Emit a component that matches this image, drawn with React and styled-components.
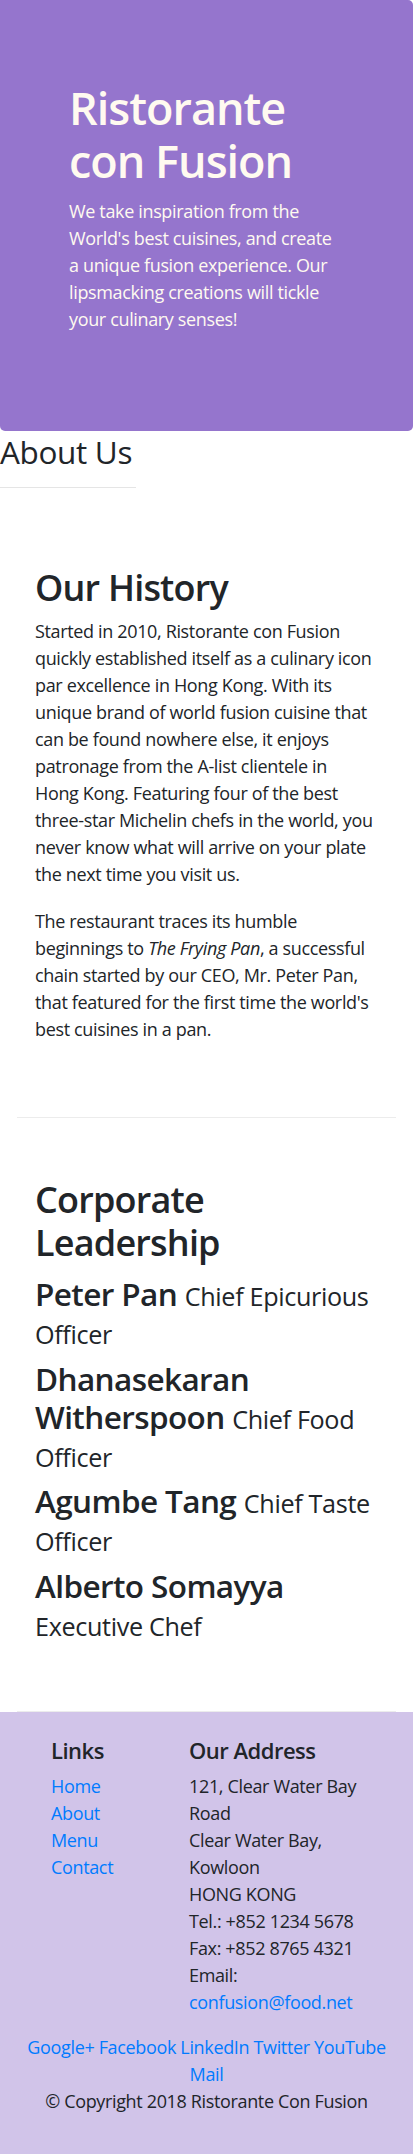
import React from 'react';
import styled, { createGlobalStyle } from 'styled-components';

const GlobalStyle = createGlobalStyle`
  body {
    margin: 0;
    font-family: "Open Sans", "Noto Sans", sans-serif;
    font-size: 18px;
    line-height: 1.5;
    color: #212529;
    background: #fff;
    letter-spacing: -0.35px;
  }
`;

const Jumbotron = styled.header`
  background: #9575cd;
  color: floralwhite;
  border-radius: 0 5px 5px 5px;
  padding: 81px 69px 98px;
`;

const Title = styled.h1`
  margin: 0 0 11px;
  font-size: 45px;
  line-height: 53px;
  font-weight: 600;
  letter-spacing: -1px;
`;

const Lead = styled.p`
  margin: 0;
  font-size: 18px;
  line-height: 27px;
`;

const PageHeading = styled.h3`
  margin: 2px 0 0;
  font-size: 31.5px;
  line-height: 1.2;
  font-weight: 400;
`;

const Divider = styled.hr`
  width: 136px;
  margin: 16px 0 18px;
  border: 0;
  border-top: 1px solid rgba(0, 0, 0, 0.1);
`;

const Section = styled.section`
  margin: 0 17px;
  padding: 60px 18px ${(p) => p.$bottom}px;
  border-bottom: 1px solid #ececec;
`;

const SectionTitle = styled.h2`
  margin: 0 0 ${(p) => p.$gap}px;
  font-size: 36px;
  line-height: 1.2;
  font-weight: 600;
  letter-spacing: -0.8px;
`;

const Para = styled.p`
  margin: 0 0 20px;
  &:last-child {
    margin-bottom: 0;
  }
`;

const Leader = styled.h3`
  margin: 0 0 9px;
  font-size: 31.5px;
  line-height: 1.2;
  font-weight: 600;
  letter-spacing: -0.6px;
`;

const Role = styled.small`
  font-size: 80%;
  font-weight: 400;
  letter-spacing: -0.35px;
`;

const Footer = styled.footer`
  background: #d1c4e9;
  padding: 25px 15px 40px;
`;

const FooterGrid = styled.div`
  display: grid;
  grid-template-columns: 108px 176px;
  column-gap: 30px;
  padding-left: 36px;
`;

const FooterHeading = styled.h5`
  margin: 0 0 9px;
  font-size: 22px;
  line-height: 27px;
  font-weight: 600;
  letter-spacing: -0.5px;
`;

const LinkList = styled.ul`
  list-style: none;
  margin: 0;
  padding: 0;
`;

const Link = styled.a`
  color: #007bff;
  text-decoration: none;
`;

const Address = styled.address`
  font-style: normal;
  margin: 0 0 18px;
`;

const Social = styled.div`
  text-align: center;
`;

const Copyright = styled.p`
  margin: 0;
  text-align: center;
`;

const leaders = [
  { name: 'Peter Pan', role: 'Chief Epicurious Officer' },
  { name: 'Dhanasekaran Witherspoon', role: 'Chief Food Officer' },
  { name: 'Agumbe Tang', role: 'Chief Taste Officer' },
  { name: 'Alberto Somayya', role: 'Executive Chef' },
];

const socials = ['Google+', 'Facebook', 'LinkedIn', 'Twitter', 'YouTube', 'Mail'];

const App = () => (
  <>
    <GlobalStyle />
    <Jumbotron>
      <Title>Ristorante con Fusion</Title>
      <Lead>
        We take inspiration from the World's best cuisines, and create a unique fusion
        experience. Our lipsmacking creations will tickle your culinary senses!
      </Lead>
    </Jumbotron>

    <PageHeading>About Us</PageHeading>
    <Divider />

    <Section $bottom={74}>
      <SectionTitle $gap={9}>Our History</SectionTitle>
      <Para>
        Started in 2010, Ristorante con Fusion quickly established itself as a culinary icon
        par excellence in Hong Kong. With its unique brand of world fusion cuisine that can be
        found nowhere else, it enjoys patronage from the A-list clientele in
        <br />
        Hong Kong. Featuring four of the best three-star Michelin chefs in the world, you never
        know what will arrive on your plate the next time you visit us.
      </Para>
      <Para>
        The restaurant traces its humble beginnings to <em>The Frying Pan</em>, a successful
        chain started by our CEO, Mr. Peter Pan, that featured for the first time the world's
        best cuisines in a pan.
      </Para>
    </Section>

    <Section $bottom={59}>
      <SectionTitle $gap={11}>Corporate Leadership</SectionTitle>
      {leaders.map((l) => (
        <Leader key={l.name}>
          {l.name} <Role>{l.role}</Role>
        </Leader>
      ))}
    </Section>

    <Footer>
      <FooterGrid>
        <div>
          <FooterHeading>Links</FooterHeading>
          <LinkList>
            {['Home', 'About', 'Menu', 'Contact'].map((t) => (
              <li key={t}>
                <Link href="#">{t}</Link>
              </li>
            ))}
          </LinkList>
        </div>
        <div>
          <FooterHeading>Our Address</FooterHeading>
          <Address>
            121, Clear Water Bay Road
            <br />
            Clear Water Bay, Kowloon
            <br />
            HONG KONG
            <br />
            Tel.: +852 1234 5678
            <br />
            Fax: +852 8765 4321
            <br />
            Email: <Link href="mailto:confusion@food.net">confusion@food.net</Link>
          </Address>
        </div>
      </FooterGrid>
      <Social>
        {socials.map((s, i) => (
          <React.Fragment key={s}>
            <Link href="#">{s}</Link>
            {i < socials.length - 1 && ' '}
          </React.Fragment>
        ))}
      </Social>
      <Copyright>© Copyright 2018 Ristorante Con Fusion</Copyright>
    </Footer>
  </>
);

export default App;
